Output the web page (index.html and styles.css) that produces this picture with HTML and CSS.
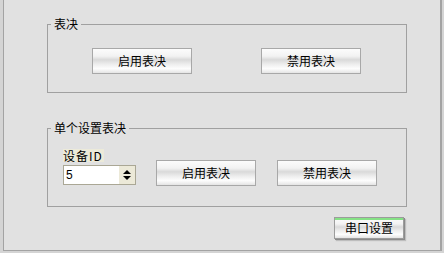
FILE: index.html
```html
<!DOCTYPE html>
<html>
  <head>
    <meta charset="UTF-8" />
    <title>表决设置</title>
    <link rel="stylesheet" href="styles.css">
  </head>
  <body>
    <div class="window">
      <div class="client">
        <fieldset class="group group-vote">
          <legend>表决</legend>
          <div class="btn-row">
            <button class="btn">启用表决</button>
            <button class="btn btn-gap">禁用表决</button>
          </div>
        </fieldset>

        <fieldset class="group group-single">
          <legend>单个设置表决</legend>
          <div class="single-row">
            <div class="device">
              <label class="device-label" for="deviceId">设备ID</label>
              <div class="spin">
                <input type="text" id="deviceId" value="5" />
                <div class="spin-arrows">
                  <span class="arrow-up"></span>
                  <span class="arrow-down"></span>
                </div>
              </div>
            </div>
            <button class="btn btn-single">启用表决</button>
            <button class="btn btn-single btn-single-gap">禁用表决</button>
          </div>
        </fieldset>

        <div class="footer">
          <button class="btn btn-serial">串口设置</button>
        </div>
      </div>
    </div>
  </body>
</html>
```

FILE: styles.css
```css
body {
  margin: 0;
  font-family: "Noto Sans CJK SC", "Liberation Sans", sans-serif;
  font-size: 12px;
  color: black;
}

.window {
  width: 444px;
  height: 253px;
  box-sizing: border-box;
  background-color: #d4d4d4;
  padding: 0 2px 2px 3px;
}

.client {
  height: 100%;
  box-sizing: border-box;
  background-color: #e1e1e1;
  border-left: 1px solid #a3a3a3;
  border-right: 2px solid #a3a3a3;
  border-bottom: 1px solid #a3a3a3;
  padding-top: 17px;
}

.group {
  width: 360px;
  box-sizing: border-box;
  margin: 0 0 0 43px;
  padding: 0 0 18px 3px;
  border: 1px solid #a0a0a0;
  min-inline-size: auto;
}

.group legend {
  padding: 0 3px;
  line-height: 14px;
  background-color: #e1e1e1;
}

.group-single {
  margin-top: 28px;
  padding-bottom: 20px;
}

.btn-row {
  display: flex;
  margin: 17px 0 0 41px;
}

.btn {
  width: 100px;
  height: 26px;
  box-sizing: border-box;
  padding: 0;
  border: 1px solid #a8a8a8;
  background: linear-gradient(#fcfcfc 0%, #f2f2f2 30%, #d9d9d9 45%, #ececec 62%, #fdfdfd 82%, #e4e4e4 100%);
  font-family: inherit;
  font-size: 12px;
  line-height: 14px;
  color: black;
}

.btn-gap {
  margin-left: 69px;
}

.single-row {
  display: flex;
  align-items: flex-start;
  margin: 14px 0 0 12px;
}

.device {
  display: flex;
  flex-direction: column;
  align-items: flex-start;
  gap: 3px;
}

.device-label {
  height: 13px;
  line-height: 13px;
  padding-right: 1px;
  letter-spacing: 1px;
  background-color: #ecead9;
}

.spin {
  display: flex;
  width: 73px;
  height: 20px;
  box-sizing: border-box;
  border: 1px solid #aaa795;
  background-color: white;
}

.spin input {
  width: 55px;
  height: 18px;
  box-sizing: border-box;
  border: 0;
  padding: 0 0 0 2px;
  outline: none;
  font-family: "Liberation Sans", sans-serif;
  font-size: 12px;
  color: black;
  background: transparent;
}

.spin-arrows {
  width: 16px;
  background-color: #ece9d8;
  display: flex;
  flex-direction: column;
  align-items: center;
  justify-content: center;
  gap: 2px;
}

.arrow-up {
  border-left: 4px solid transparent;
  border-right: 4px solid transparent;
  border-bottom: 4px solid black;
}

.arrow-down {
  border-left: 4px solid transparent;
  border-right: 4px solid transparent;
  border-top: 4px solid black;
}

.btn-single {
  margin: 11px 0 0 20px;
}

.btn-single-gap {
  margin-left: 21px;
}

.footer {
  display: flex;
  justify-content: flex-end;
  margin-top: 10px;
  padding-right: 36px;
}

.btn-serial {
  width: 70px;
  height: 22px;
  border-color: #9c9c9c;
  box-shadow: inset 0 2px 0 #86e286, 1px 1px 0 #8a8a8a, 2px 2px 1px #bdbdbd;
}
```
